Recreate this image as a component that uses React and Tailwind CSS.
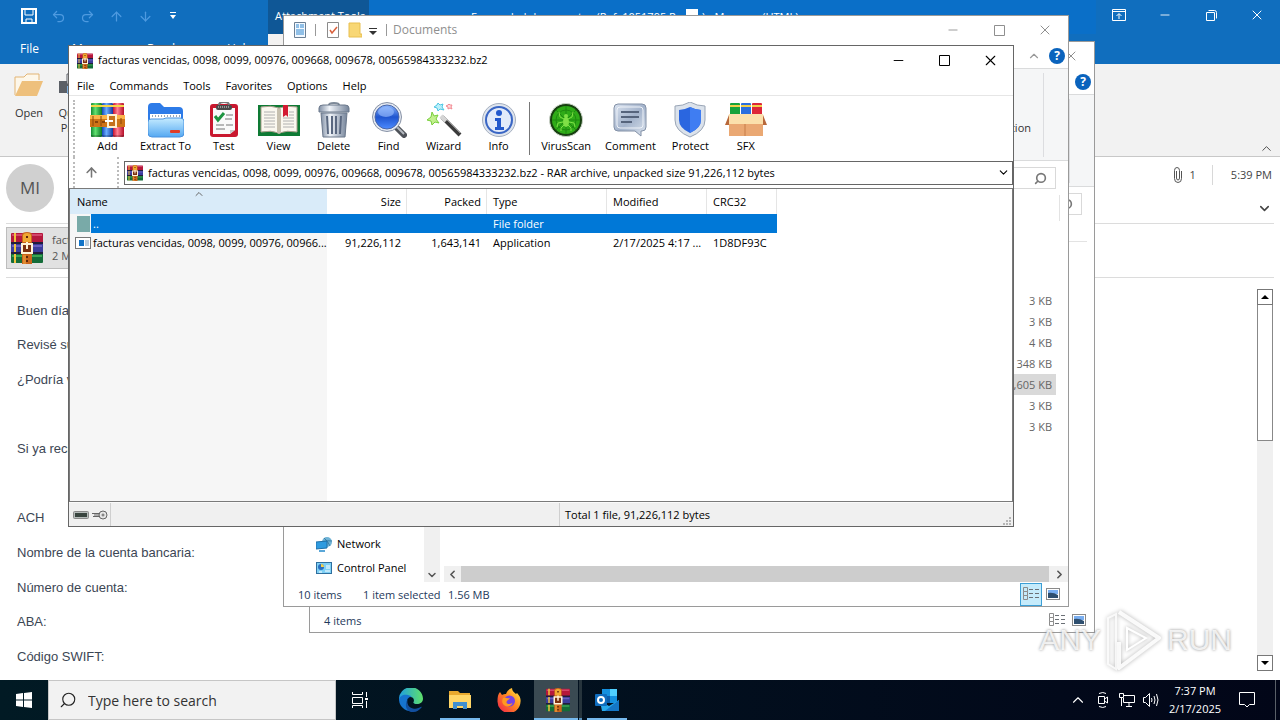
import {
  ArrowDown,
  ArrowUp,
  ChevronDown,
  ChevronLeft,
  ChevronRight,
  ChevronUp,
  Minus,
  Redo2,
  Search,
  Undo2,
  X,
} from 'lucide-react';

const bodyLines = [
  'Buen día,',
  'Revisé sus',
  '¿Podría ver',
  '',
  'Si ya recibió',
  '',
  'ACH',
  'Nombre de la cuenta bancaria:',
  'Número de cuenta:',
  'ABA:',
  'Código SWIFT:',
];

const fileSizes = ['3 KB', '3 KB', '4 KB', '348 KB', '1,605 KB', '3 KB', '3 KB'];

/* ---------- icons ---------- */

function BooksIcon({ className }) {
  return (
    <svg viewBox="0 0 32 32" className={className} aria-hidden="true">
      <rect x="0" y="1" width="32" height="10" rx="1" fill="#b5183c" />
      <rect x="1" y="2" width="30" height="2" fill="#d2456b" />
      <rect x="0" y="11" width="32" height="10" rx="1" fill="#3b3c9c" />
      <rect x="1" y="13" width="30" height="2" fill="#6a5fc0" />
      <rect x="0" y="21" width="32" height="10" rx="1" fill="#146c38" />
      <rect x="1" y="23" width="30" height="2" fill="#39a552" />
      <path d="M3 1h2v9H3zM3 12h2v8H3zM3 22h2v9H3z" fill="#f0c23c" />
      <path d="M0 10h32v2H0zM0 20h32v2H0z" fill="#221c3c" />
      <path d="M11 3q0-3 5-3t5 3v29H11z" fill="#c9651c" />
      <path d="M12 3q1-2 4-2t4 2v7h-8z" fill="#f0a832" />
      <path d="M12 23h3v9h-3z" fill="#e08a30" />
      <rect x="11" y="12" width="10" height="9" fill="#7c3010" stroke="#fff3d8" strokeWidth="2" />
      <path d="M16 10v7" stroke="#fff3d8" strokeWidth="2" />
      <path d="M16 4v2M16 24v2M16 28v2" stroke="#5e2608" strokeWidth="2" />
    </svg>
  );
}

function AddIcon() {
  return (
    <svg viewBox="0 0 36 36" className="size-9" aria-hidden="true">
      <defs>
        <linearGradient id="bookGreen">
          <stop offset="0" stopColor="#128a32" />
          <stop offset=".4" stopColor="#62e070" />
          <stop offset="1" stopColor="#0b7a28" />
        </linearGradient>
        <linearGradient id="bookBlue">
          <stop offset="0" stopColor="#1547b8" />
          <stop offset=".4" stopColor="#6aaeff" />
          <stop offset="1" stopColor="#1238a0" />
        </linearGradient>
        <linearGradient id="bookRed">
          <stop offset="0" stopColor="#c4122f" />
          <stop offset=".4" stopColor="#ff8093" />
          <stop offset="1" stopColor="#b50d28" />
        </linearGradient>
      </defs>
      <rect x="1" y="1" width="11" height="34" rx="1" fill="url(#bookGreen)" />
      <rect x="12" y="1" width="11" height="34" rx="1" fill="url(#bookBlue)" />
      <rect x="23" y="1" width="11" height="34" rx="1" fill="url(#bookRed)" />
      <path d="M1 4h11M12 4h11M23 4h11" stroke="#f5d548" strokeWidth="2" />
      <path d="M1 34h33" stroke="#000" strokeOpacity=".2" strokeWidth="2" />
      <path d="M0 13h35v12H0z" fill="#cf7417" />
      <path d="M0 13h35v4H0z" fill="#fbb54a" />
      <path d="M3 14v10M11 14v10M31 16v6" stroke="#8a4408" />
      <path d="M5 20h3M12 20h3" stroke="#8a4408" strokeWidth="2" />
      <rect x="18" y="13" width="8" height="12" fill="#c5721c" stroke="#fff1cf" strokeWidth="2" />
      <path d="M15 19h8" stroke="#fff" strokeWidth="2" />
    </svg>
  );
}

function ExtractIcon() {
  return (
    <svg viewBox="0 0 36 36" className="size-9" aria-hidden="true">
      <defs>
        <linearGradient id="folderFront" x2="0" y2="1">
          <stop offset="0" stopColor="#c5ebff" />
          <stop offset="1" stopColor="#55a9f2" />
        </linearGradient>
      </defs>
      <path d="M0 5q0-4 4-4h8l4 4h15q4 0 4 4v20H0z" fill="#2d7be8" />
      <path d="M2 12h31v9H2z" fill="#fff" />
      <path d="M4 14h28" stroke="#9aa6b5" strokeWidth="2" strokeDasharray="1 2" />
      <path d="M0 20q0-3 3-3h12l3-1h14q4 0 4 3v12q0 4-4 4H4q-4 0-4-4z" fill="url(#folderFront)" stroke="#4a93e0" />
      <rect x="22" y="28" width="10" height="3" rx="1" fill="#e03c28" />
    </svg>
  );
}

function TestIcon() {
  return (
    <svg viewBox="0 0 36 36" className="size-9" aria-hidden="true">
      <rect x="4" y="2" width="28" height="33" rx="3" fill="#c9182f" />
      <path d="M7 6h22v22l-5 4H7z" fill="#fafafa" />
      <path d="M29 28l-5 4v-4z" fill="#c9c9c9" />
      <rect x="10" y="3" width="16" height="5" rx="2" fill="#4a4a4a" />
      <path d="M13 3q0-3 5-3t5 3" fill="none" stroke="#777" strokeWidth="2" />
      <path d="M12 5h12" stroke="#e2e2e2" strokeDasharray="1 1" />
      <path d="M9 14l3 4 6-7" fill="none" stroke="#1d9440" strokeWidth="3" />
      <path d="M20 13h7M19 17h7M10 23h8M20 23h7M10 27h9" stroke="#777" />
    </svg>
  );
}

function ViewIcon() {
  return (
    <svg viewBox="0 0 44 36" className="h-9 w-11" aria-hidden="true">
      <path d="M1 3h42v31H1z" fill="#0e7a34" />
      <path d="M4 5q10-2 18 1v25q-8-3-18-1zM40 5q-10-2-18 1v25q8-3 18-1z" fill="#faf7ef" stroke="#a99f8c" />
      <path d="M20 6l2 1 2-1v25l-2 1-2-1z" fill="#c6bfae" />
      <path
        d="M7 10h11M7 13h11M7 16h11M7 19h11M7 22h11M7 25h11M32 10h5M32 13h5M26 16h11M26 19h11M26 22h11M26 25h11"
        stroke="#b0b0b0"
      />
      <path d="M26 3h5v12l-2-2-3 2z" fill="#d31b32" />
    </svg>
  );
}

function DeleteIcon() {
  return (
    <svg viewBox="0 0 36 36" className="size-9" aria-hidden="true">
      <defs>
        <linearGradient id="can">
          <stop offset="0" stopColor="#8290a5" />
          <stop offset=".35" stopColor="#f0f4f9" />
          <stop offset="1" stopColor="#75849a" />
        </linearGradient>
      </defs>
      <path d="M13 3q0-2 5-2t5 2" fill="none" stroke="#7d8998" strokeWidth="2" />
      <path d="M3 6q0-3 4-3h22q4 0 4 3v4H3z" fill="url(#can)" stroke="#6b788b" />
      <path d="M5 11h26l-2 24H7z" fill="url(#can)" stroke="#6b788b" />
      <path d="M11 14l1 18M16 14v18M20 14v18M25 14l-1 18" stroke="#5a6880" strokeWidth="2" />
    </svg>
  );
}

function FindIcon() {
  return (
    <svg viewBox="0 0 36 36" className="size-9" aria-hidden="true">
      <defs>
        <linearGradient id="lens" x2="0" y2="1">
          <stop offset="0" stopColor="#8db8ff" />
          <stop offset=".5" stopColor="#1f55cf" />
          <stop offset="1" stopColor="#4c8bff" />
        </linearGradient>
      </defs>
      <path d="M25 25l8 8" stroke="#4e5259" strokeWidth="6" strokeLinecap="round" />
      <path d="M25 24l8 8" stroke="#b5b9c0" strokeWidth="2" />
      <circle cx="16" cy="15" r="14.500" fill="#e3e8f0" stroke="#8792a6" />
      <circle cx="16" cy="15" r="12" fill="url(#lens)" stroke="#4a66a8" />
      <ellipse cx="15" cy="10" rx="8" ry="5" fill="#9fc2ff" opacity=".6" />
    </svg>
  );
}

function WizardIcon() {
  return (
    <svg viewBox="0 0 36 36" className="size-9" aria-hidden="true">
      <path d="M16 15l18 18" stroke="#3b3b3b" strokeWidth="4" />
      <path d="M17 14l17 17" stroke="#8e8e8e" strokeWidth="1" />
      <path d="M15 14l5 5" stroke="#d5d5d5" strokeWidth="4" />
      <path d="M6 10l2 4 4-1-2 4 3 4-4-1-3 3-1-4-4-1 4-3z" fill="#c2f08d" stroke="#79cf3c" />
      <path d="M12 1l2 2 3-1-1 3 2 3-4-1-2 2-1-3-3-1 3-2z" fill="#baf0fa" stroke="#4fc6e4" />
      <path d="M23 2l1 1h2l-1 2 1 2-2-1-2 1v-2l-2-1 2-1z" fill="#ffdada" stroke="#f28a93" />
    </svg>
  );
}

function InfoIcon() {
  return (
    <svg viewBox="0 0 36 36" className="size-9" aria-hidden="true">
      <circle cx="18" cy="18" r="16.500" fill="#dfe5ee" stroke="#a5afbf" />
      <circle cx="18" cy="18" r="13" fill="#e3ebfa" stroke="#3a66c4" strokeWidth="2" />
      <circle cx="18" cy="11" r="3" fill="#2459cc" />
      <path d="M14 16h6v9h3v3h-9v-3h2v-6h-2z" fill="#2459cc" />
    </svg>
  );
}

function VirusIcon() {
  return (
    <svg viewBox="0 0 36 36" className="size-9" aria-hidden="true">
      <circle cx="18" cy="18" r="16.500" fill="#173f10" stroke="#c9d1c7" />
      <circle cx="18" cy="18" r="14" fill="#2fab18" />
      <path d="M18 4v28M4 18h28M8 8l20 20M28 8L8 28" stroke="#1f8a10" />
      <circle cx="18" cy="18" r="10" fill="none" stroke="#1f8a10" />
      <ellipse cx="18" cy="20" rx="3" ry="5" fill="#7fe046" />
      <circle cx="18" cy="14" r="2" fill="#7fe046" />
      <path
        d="M16 17l-4-2-1-5M15 20l-5 1-1 4M16 23l-3 3v3M20 17l4-2 1-5M21 20l5 1 1 4M20 23l3 3v3"
        fill="none"
        stroke="#7fe046"
      />
    </svg>
  );
}

function CommentIcon() {
  return (
    <svg viewBox="0 0 36 36" className="size-9" aria-hidden="true">
      <defs>
        <linearGradient id="bubble" x2="1" y2="1">
          <stop offset="0" stopColor="#dae3f0" />
          <stop offset=".5" stopColor="#a3b3cb" />
          <stop offset="1" stopColor="#dce4ef" />
        </linearGradient>
      </defs>
      <path d="M6 2h24q4 0 4 4v19q0 4-4 4h-1v5l-6-5H6q-4 0-4-4V6q0-4 4-4z" fill="url(#bubble)" stroke="#8290a6" />
      <rect x="5" y="5" width="26" height="21" rx="3" fill="none" stroke="#eef2f8" />
      <path d="M9 10h18M9 15h18M9 20h11" stroke="#56647c" strokeWidth="2" />
    </svg>
  );
}

function ProtectIcon() {
  return (
    <svg viewBox="0 0 36 36" className="size-9" aria-hidden="true">
      <path d="M18 0q7 4 15 4v14q0 11-15 17Q3 29 3 18V4q8 0 15-4z" fill="#dbe2eb" stroke="#98a4b5" />
      <path d="M18 5q6 3 11 3v10q0 8-11 13Q7 26 7 18V8q5 0 11-3z" fill="#2a66e0" />
      <path d="M18 5q6 3 11 3v10q0 8-11 13z" fill="#3f7df2" />
    </svg>
  );
}

function SfxIcon() {
  return (
    <svg viewBox="0 0 42 36" className="h-9 w-[42px]" aria-hidden="true">
      <rect x="5" y="1" width="10" height="14" rx="1" fill="#17a33a" />
      <rect x="16" y="1" width="10" height="14" rx="1" fill="#2a6fdf" />
      <rect x="27" y="1" width="10" height="14" rx="1" fill="#dd2739" />
      <path d="M5 4h10M16 4h10M27 4h10" stroke="#f2d04a" strokeWidth="2" />
      <path d="M4 13h34v21H4z" fill="#eaa873" />
      <path d="M4 12h34l2 10H2z" fill="#fbe0ac" />
      <path d="M4 13l-4 10h4zM38 13l4 10h-4z" fill="#b8683a" />
      <path d="M20 22v12" stroke="#c67c48" />
    </svg>
  );
}

function MaximizeIcon() {
  return (
    <svg viewBox="0 0 11 11" className="size-[11px]" fill="none" stroke="currentColor">
      <path d="M.5.5h10v10H.5z" />
    </svg>
  );
}

function HelpBadge() {
  return (
    <button
      aria-label="Help"
      className="flex size-4 items-center justify-center rounded-full bg-[#0a63bd] text-[12px] leading-4 font-bold text-white"
    >
      ?
    </button>
  );
}

function DetailsIcon() {
  return (
    <svg viewBox="0 0 16 14" className="h-[14px] w-4" fill="none" stroke="#6b7076" aria-hidden="true">
      <path d="M.5.5h4v4h-4zM.5 4.500h4v4h-4zM.5 8.500h4v4h-4z" stroke="#8c8c8c" />
      <path d="M6 2.500h4M12 2.500h4M6 6.500h4M12 6.500h4M6 10.500h4M12 10.500h4" />
    </svg>
  );
}

function ThumbIcon() {
  return (
    <svg viewBox="0 0 14 12" className="h-3 w-[14px]" aria-hidden="true">
      <rect x=".5" y=".5" width="13" height="11" fill="#fff" stroke="#8a8a8a" />
      <path d="M2 2h10v4H2z" fill="#79aef0" />
      <path d="M2 5q5-1 10 2v3H2z" fill="#2f4f6f" />
    </svg>
  );
}

/* ---------- Outlook message in the background ---------- */

function OutlookWindow() {
  return (
    <main className="flex min-h-0 flex-1 flex-col bg-white">
      <header className="bg-[#106ebe] text-white">
        <div className="flex h-[34px] items-start">
          <div className="flex h-8 w-[268px] shrink-0 items-center gap-[14px] pl-[21px] text-[#4e9ae0]">
            <button aria-label="Save" className="text-white">
              <svg viewBox="0 0 16 16" className="size-4" fill="none" stroke="currentColor" strokeWidth="2">
                <path d="M1 1h14v14H1z" />
                <path d="M4 2v5h8V2M5 15v-4h6v4" strokeWidth="1" />
              </svg>
            </button>
            <button aria-label="Undo"><Undo2 size={15} /></button>
            <button aria-label="Redo"><Redo2 size={15} /></button>
            <button aria-label="Previous item"><ArrowUp size={15} /></button>
            <button aria-label="Next item"><ArrowDown size={15} /></button>
            <button aria-label="Customize toolbar" className="pl-[2px] text-white">
              <svg viewBox="0 0 8 8" className="size-2" fill="currentColor">
                <path d="M1 0h6v1H1zM1 3h6L4 7z" />
              </svg>
            </button>
          </div>
          <span className="h-[34px] w-[101px] shrink-0 bg-[#0f5796] pt-2 pl-[7px] text-[11px] leading-4 whitespace-nowrap">
            Attachment Tools
          </span>
          <h1 className="flex h-[34px] min-w-0 flex-1 items-start gap-1 overflow-hidden bg-[#0a6fc8] pt-[9px] pl-[102px] text-[11px] leading-4 whitespace-nowrap">
            Forwarded documentos (Ref. 1051795 Re <span className="h-4 w-3 bg-white" /> ) - Message (HTML)
          </h1>
          <div className="flex h-[30px] shrink-0">
            <button aria-label="Ribbon display" className="flex w-[46px] items-center justify-center">
              <svg viewBox="0 0 14 12" className="h-3 w-[14px]" fill="none" stroke="currentColor">
                <path d="M.5.5h13v11H.5zM.5 2.500h13M7 10V5M4.500 7L7 4.500 9.500 7" />
              </svg>
            </button>
            <button aria-label="Minimize" className="flex w-[46px] items-center justify-center">
              <Minus size={14} strokeWidth={1.5} />
            </button>
            <button aria-label="Restore" className="flex w-[46px] items-center justify-center">
              <svg viewBox="0 0 11 11" className="size-[11px]" fill="none" stroke="currentColor">
                <path d="M.5 2.500h8v8h-8zM2.500.5h6q2 0 2 2v6" />
              </svg>
            </button>
            <button aria-label="Close" className="flex w-[46px] items-center justify-center">
              <X size={16} strokeWidth={1.5} />
            </button>
          </div>
        </div>
        <nav className="flex h-[30px] items-center text-[12px]">
          <a href="#file" className="w-[72px] pl-5">File</a>
          <a href="#message" className="w-[75px]">Me</a>
          <a href="#read" className="w-[80px]">Read</a>
          <a href="#help" className="w-[41px]">Hel</a>
          <span className="h-full w-20 bg-[#f3f2f1]" />
        </nav>
      </header>

      <section className="flex h-[93px] justify-between border-b border-[#c8c8c8] bg-[#f2f2f2] text-[11px] leading-[15px] text-[#333]">
        <div className="flex gap-[14px] pt-[9px] pl-[14px]">
          <button className="flex flex-col items-center gap-2">
            <svg viewBox="0 0 30 24" className="h-6 w-[30px]">
              <path d="M1 22V4h9l3-3h12v6" fill="#fdf7ea" stroke="#e3b574" />
              <path d="M1 23L8 8h21l-6 15z" fill="#eec07c" />
            </svg>
            Open
          </button>
          <button className="flex flex-col items-center gap-2">
            <svg viewBox="0 0 30 24" className="h-6 w-[30px]">
              <path d="M1 8h14v12H1z" fill="#5b5f66" />
              <path d="M9 1h12v10H9z" fill="#fff" stroke="#5b5f66" />
              <path d="M9 13h12v8H9z" fill="#7fb0e0" />
            </svg>
            <span>Quick<br />Print</span>
          </button>
        </div>
        <button aria-label="Collapse ribbon" className="self-end px-[6px] text-[#444]">
          <ChevronUp size={15} strokeWidth={1.5} />
        </button>
      </section>

      <section className="flex h-[66px] justify-between pr-2 pl-[6px] text-[#444]">
        <div className="mt-[7px] flex size-12 items-center justify-center rounded-full bg-[#d0d0d0] text-[17px] text-[#555]">
          MI
        </div>
        <div className="flex flex-col items-end pt-2">
          <div className="flex h-5 items-center text-[11px]">
            <svg viewBox="0 0 8 16" className="mr-1 h-4 w-2" fill="none" stroke="#555">
              <path d="M2.500 4v7q0 2 1.500 2t1.500-2V3.500Q5.500.5 3 .5T.5 3.500v8q0 4 3.500 4t3.500-4V4" />
            </svg>
            <span className="pr-4 pl-1">1</span>
            <span className="h-5 border-l border-[#d8d8d8] pr-[18px]" />
            5:39 PM
          </div>
          <button aria-label="Expand header" className="mt-4"><ChevronDown size={15} strokeWidth={2.5} /></button>
        </div>
      </section>

      <section className="mx-[6px] flex h-[55px] items-start border-y border-[#dcdcdc] pt-[3px]">
        <div className="flex h-[42px] w-[200px] items-center gap-[9px] border border-[#bdbdbd] bg-[#e1e1e1] pl-1 text-[11px] leading-4 text-[#555]">
          <BooksIcon className="size-8" />
          <span>fact<br />2 MB</span>
        </div>
      </section>

      <section className="flex min-h-0 flex-1 justify-between pt-[11px] pr-[7px] pb-[9px]">
        <div className="-mb-[3px] flex flex-1 flex-col pt-1 pl-[17px] font-['Liberation_Sans',Arial,sans-serif] text-[13px] text-[#3c4654]">
          {bodyLines.map((line, i) => (
            <p key={i} className="flex flex-1 items-center">{line}</p>
          ))}
        </div>
        <div className="flex w-4 flex-col bg-[#f0f0f0]">
          <button aria-label="Scroll up" className="flex h-4 items-center justify-center border border-[#777] bg-white">
            <svg viewBox="0 0 8 4" className="h-1 w-2"><path d="M0 4l4-4 4 4z" /></svg>
          </button>
          <div className="h-[136px] border border-t-0 border-[#888] bg-white" />
          <button aria-label="Scroll down" className="mt-auto flex h-4 items-center justify-center border border-[#777] bg-white">
            <svg viewBox="0 0 8 4" className="h-1 w-2"><path d="M0 0h8L4 4z" /></svg>
          </button>
        </div>
      </section>
    </main>
  );
}

/* ---------- Explorer windows ---------- */

function ExplorerChrome({ title }) {
  return (
    <>
      <div className="flex h-7 shrink-0 items-center pl-[9px] text-[#8f8f8f]">
        <svg viewBox="0 0 14 16" className="h-4 w-[14px]">
          <path d="M1.500.5h11v15h-11z" fill="#f3f9ff" stroke="#6b7f94" />
          <path d="M3 3h3M3 5h3M7 3h4M7 5h4M3 8h8M3 10h8M3 12h8" stroke="#2f86cf" />
        </svg>
        <span className="mx-2 h-3 border-l border-[#999]" />
        <svg viewBox="0 0 14 16" className="ml-[2px] h-4 w-[14px]">
          <path d="M1.500.5h11v15h-11z" fill="#fff" stroke="#8b8b8b" />
          <path d="M4 8l2 3 5-6" fill="none" stroke="#d9603c" strokeWidth="1.500" />
        </svg>
        <svg viewBox="0 0 14 16" className="ml-2 h-4 w-[14px]">
          <path d="M1 1h11v11h2v3H1z" fill="#f8d775" stroke="#e8bf50" />
        </svg>
        <svg viewBox="0 0 8 8" className="mx-[7px] mt-1 size-2">
          <path d="M0 0h8v1H0zM0 3h8L4 7z" fill="#333" />
        </svg>
        <span className="mr-[6px] ml-[2px] h-3 border-l border-[#999]" />
        <h2 className="flex-1 text-[12px]">{title}</h2>
        <button aria-label="Minimize" className="flex w-[46px] justify-center"><Minus size={14} strokeWidth={1.5} /></button>
        <button aria-label="Maximize" className="flex w-[46px] justify-center"><MaximizeIcon /></button>
        <button aria-label="Close" className="flex w-[46px] justify-center"><X size={16} strokeWidth={1.5} /></button>
      </div>
      <div className="flex h-[25px] shrink-0 items-center justify-end gap-2 border-b border-[#dadbdc] pr-[3px] text-[#999]">
        <ChevronUp size={14} />
        <HelpBadge />
      </div>
      <div className="flex h-[92px] shrink-0 items-center justify-end border-b border-[#dadbdc] bg-[#f5f6f7]">
        {title === 'Documents' && <span className="mt-7 mr-3 text-[11px] text-[#333]">selection</span>}
        <span className="mr-6 h-[84px] border-l border-[#dcdde0]" />
      </div>
      <div className="flex h-[34px] shrink-0 justify-end pt-[6px] pr-3">
        <label className="flex h-[22px] w-[160px] items-center justify-end border border-[#d9d9d9] pr-2 text-[#777]">
          <input aria-label={`Search ${title}`} className="w-full min-w-0 outline-none" />
          <Search size={13} strokeWidth={3} className="shrink-0 -scale-x-100" />
        </label>
      </div>
    </>
  );
}

function ViewSwitch({ active }) {
  return (
    <div className="flex h-full items-center">
      <button
        aria-label="Details"
        className={
          active
            ? 'flex h-[23px] w-[22px] items-center justify-center border border-[#3c9fd6] bg-[#c5ebfb]'
            : 'flex w-[22px] items-center justify-center'
        }
      >
        <DetailsIcon />
      </button>
      <button aria-label="Thumbnails" className="flex w-[22px] items-center justify-center"><ThumbIcon /></button>
    </div>
  );
}

function BackExplorer() {
  return (
    <section className="absolute top-[41px] right-[185px] bottom-[87px] left-[309px] flex flex-col border border-[#9a9a9a] bg-white">
      <ExplorerChrome title="Pictures" />
      <div className="mr-[7px] h-[21px] border-b border-[#e3e3e3]" />
      <footer className="mt-auto flex h-6 items-center justify-between pr-1 pl-[14px] text-[11px] text-[#1e395b]">
        <span className="pt-[2px]">4 items</span>
        <ViewSwitch />
      </footer>
    </section>
  );
}

function FrontExplorer() {
  return (
    <section className="absolute top-[15px] right-[211px] bottom-[113px] left-[283px] flex flex-col border border-[#9a9a9a] bg-white">
      <ExplorerChrome title="Documents" />
      <div className="flex min-h-0 flex-1">
        <nav className="flex w-[140px] flex-col justify-end pb-[2px] pl-8 text-[11px]">
          <a href="#network" className="flex h-6 items-center gap-[5px]">
            <svg viewBox="0 0 16 16" className="size-4">
              <circle cx="11" cy="6" r="5" fill="#6fb3d6" />
              <path d="M8 2q4 3 6 8M7 6q4-2 9-1" stroke="#3b7fa8" fill="none" />
              <path d="M0 6l11-1v7L0 13z" fill="#2f9be0" stroke="#1e6fa8" />
              <path d="M3 15h6" stroke="#5aa7d8" strokeWidth="2" />
            </svg>
            Network
          </a>
          <a href="#control" className="flex h-6 items-center gap-[5px] whitespace-nowrap">
            <svg viewBox="0 0 16 12" className="h-3 w-4">
              <rect x=".5" y=".5" width="15" height="11" fill="#7fd0f5" stroke="#2f6f9e" />
              <circle cx="5" cy="5" r="3" fill="#2a6fc0" />
              <path d="M5 5V2a3 3 0 0 1 3 3z" fill="#f6d04a" />
              <path d="M10 4h4M10 6h4M3 10h3M9 9h5" stroke="#fff" />
            </svg>
            Control Panel
          </a>
        </nav>
        <div className="flex w-4 items-end justify-center bg-[#f0f0f0] pb-px text-[#555]">
          <ChevronDown size={12} strokeWidth={3} />
        </div>
        <div className="ml-1 flex min-w-0 flex-1 flex-col">
          <div className="mr-2 h-[26px] border-r border-[#e3e3e3]" />
          <table className="mt-[69px] mr-3 text-[11px] text-[#666]">
            <tbody>
              {fileSizes.map((size, i) => (
                <tr key={i} className={size === '1,605 KB' ? 'h-[21px] bg-[#d9d9d9]' : 'h-[21px]'}>
                  <td className="pr-1 text-right leading-[21px]">{size}</td>
                </tr>
              ))}
            </tbody>
          </table>
          <div className="mt-auto flex h-4 items-center justify-between bg-[#f0f0f0] text-[#555]">
            <ChevronLeft size={13} strokeWidth={3} className="mx-[2px]" />
            <div className="h-4 flex-1 bg-[#cdcdcd]" />
            <ChevronRight size={13} strokeWidth={3} className="mr-[2px] ml-1" />
          </div>
        </div>
      </div>
      <footer className="flex h-6 shrink-0 items-center pr-1 pl-[14px] text-[11px] text-[#1e395b]">
        <span className="w-[65px] pt-[2px]">10 items</span>
        <span className="w-[85px] pt-[2px] whitespace-nowrap">1 item selected</span>
        <span className="flex-1 pt-[2px]">1.56 MB</span>
        <ViewSwitch active />
      </footer>
    </section>
  );
}

/* ---------- WinRAR ---------- */

const leftTools = [
  { label: 'Add', Icon: AddIcon },
  { label: 'Extract To', Icon: ExtractIcon },
  { label: 'Test', Icon: TestIcon },
  { label: 'View', Icon: ViewIcon },
  { label: 'Delete', Icon: DeleteIcon },
  { label: 'Find', Icon: FindIcon },
  { label: 'Wizard', Icon: WizardIcon },
  { label: 'Info', Icon: InfoIcon },
];

const rightTools = [
  { label: 'VirusScan', Icon: VirusIcon },
  { label: 'Comment', Icon: CommentIcon },
  { label: 'Protect', Icon: ProtectIcon },
  { label: 'SFX', Icon: SfxIcon },
];

function ToolButton({ label, Icon, padding = 'px-[5px]' }) {
  return (
    <button className={`flex min-w-[55px] flex-col items-center whitespace-nowrap ${padding}`}>
      <Icon />
      <span className="leading-4">{label}</span>
    </button>
  );
}

function ArchiveTable() {
  const head = 'border-r border-[#e5e5e5] p-0 font-normal';
  return (
    <table className="w-[707px] table-fixed border-separate border-spacing-0 leading-[19px]">
      <colgroup>
        <col className="w-[257px]" />
        <col className="w-[80px]" />
        <col className="w-[80px]" />
        <col className="w-[120px]" />
        <col className="w-[100px]" />
        <col className="w-[70px]" />
      </colgroup>
      <thead>
        <tr className="h-[25px] text-left">
          <th className="relative bg-[#d9ebf9] p-0 pl-[7px] font-normal">
            Name
            <ChevronUp size={12} strokeWidth={2} className="absolute inset-x-0 -top-px mx-auto text-[#666]" />
          </th>
          <th className={`${head} pr-[5px] text-right`}>Size</th>
          <th className={`${head} pr-[5px] text-right`}>Packed</th>
          <th className={`${head} pl-[6px]`}>Type</th>
          <th className={`${head} pl-[6px]`}>Modified</th>
          <th className={`${head} pl-[6px]`}>CRC32</th>
        </tr>
      </thead>
      <tbody>
        <tr className="h-[19px] bg-[#0078d7] text-white">
          <td className="p-0">
            <div className="flex items-center">
              <span className="flex h-[19px] w-[21px] items-center justify-end bg-[#f6f6f6] pr-px">
                <span className="h-4 w-[13px] bg-[#79aaa8]" />
              </span>
              <span className="pl-[2px]">..</span>
            </div>
          </td>
          <td />
          <td />
          <td className="p-0 pl-[6px]">File folder</td>
          <td />
          <td />
        </tr>
        <tr className="h-[19px] whitespace-nowrap">
          <td className="p-0">
            <div className="flex items-center gap-[2px] pl-[5px]">
              <svg viewBox="0 0 16 12" className="h-3 w-4 shrink-0">
                <rect x=".5" y=".5" width="15" height="11" fill="#fff" stroke="#777" />
                <rect x="4" y="3" width="5" height="6" fill="#1173c7" />
                <path d="M10 4h4M10 6h4M10 8h4" stroke="#7a9cba" />
              </svg>
              <span>facturas vencidas, 0098, 0099, 00976, 00966...</span>
            </div>
          </td>
          <td className="p-0 pr-[6px] text-right">91,226,112</td>
          <td className="p-0 pr-[6px] text-right">1,643,141</td>
          <td className="p-0 pl-[6px]">Application</td>
          <td className="p-0 pl-[6px]">2/17/2025 4:17 ...</td>
          <td className="p-0 pl-[6px]">1D8DF93C</td>
        </tr>
      </tbody>
    </table>
  );
}

function WinRarWindow() {
  return (
    <section className="absolute top-[45px] right-[266px] bottom-[193px] left-[68px] flex flex-col border border-[#666] bg-white text-[11px] text-black">
      <div className="flex h-[29px] shrink-0 items-center pl-2">
        <BooksIcon className="size-4" />
        <h2 className="flex-1 pl-[5px]">facturas vencidas, 0098, 0099, 00976, 009668, 009678, 00565984333232.bz2</h2>
        <button aria-label="Minimize" className="flex w-[46px] justify-center"><Minus size={15} strokeWidth={1.5} /></button>
        <button aria-label="Maximize" className="flex w-[46px] justify-center"><MaximizeIcon /></button>
        <button aria-label="Close" className="flex w-[46px] justify-center"><X size={17} strokeWidth={1.5} /></button>
      </div>
      <nav className="flex h-[21px] shrink-0 items-center gap-[15px] border-b border-[#e6e6e6] pt-[2px] pl-2">
        <button>File</button>
        <button>Commands</button>
        <button>Tools</button>
        <button>Favorites</button>
        <button>Options</button>
        <button>Help</button>
      </nav>
      <div className="flex h-[61px] shrink-0 pl-1">
        <span className="mt-1 mr-[5px] border-l-2 border-dotted border-[#bbb]" />
        <div className="flex pt-[6px]">
          {leftTools.map((tool) => <ToolButton key={tool.label} {...tool} />)}
          <span className="mr-1 ml-[3px] h-[53px] border-l border-[#777]" />
          {rightTools.map((tool) => <ToolButton key={tool.label} padding="px-[7px]" {...tool} />)}
        </div>
      </div>
      <div className="flex h-[31px] shrink-0 items-center pl-1">
        <span className="h-full border-l-2 border-dotted border-[#bbb]" />
        <button aria-label="Up one level" className="flex w-[42px] justify-center pr-[10px] text-[#777]">
          <ArrowUp size={15} strokeWidth={2.5} />
        </button>
        <span className="h-full border-l-2 border-dotted border-[#bbb]" />
        <div className="ml-[5px] flex h-6 flex-1 items-center border border-[#666] pl-[2px]">
          <BooksIcon className="size-4 shrink-0" />
          <span className="flex-1 pt-[2px] pl-[5px]">
            facturas vencidas, 0098, 0099, 00976, 009668, 009678, 00565984333232.bz2 - RAR archive, unpacked size 91,226,112 bytes
          </span>
          <button aria-label="Show history" className="pr-[2px]"><ChevronDown size={13} strokeWidth={2} /></button>
        </div>
      </div>
      <div className="min-h-0 flex-1 border border-[#7a7a7a] bg-[linear-gradient(to_right,#f6f6f6_257px,#ffffff_257px)]">
        <ArchiveTable />
      </div>
      <footer className="flex h-6 shrink-0 items-center border-t border-[#fafafa] bg-[#f0f0f0] pl-1">
        <div className="flex h-full w-[38px] items-center gap-[3px] border-r border-[#cfcfcf]">
          <svg viewBox="0 0 16 8" className="h-2 w-4">
            <rect x=".5" y=".5" width="15" height="7" rx="1" fill="#b6bcba" stroke="#8a8a8a" />
            <rect x="2" y="2" width="12" height="4" fill="#39453f" />
          </svg>
          <svg viewBox="0 0 16 10" className="h-[10px] w-4" fill="none" stroke="#666">
            <path d="M0 3.500h8M1 6.500h7M2 5h6" />
            <circle cx="11" cy="5" r="4" fill="#e6e6e6" />
            <circle cx="11" cy="5" r="1" />
          </svg>
        </div>
        <div className="h-full flex-1 border-r border-[#cfcfcf]" />
        <div className="flex h-full flex-1 items-center justify-between pt-[2px] pl-[5px]">
          <span>Total 1 file, 91,226,112 bytes</span>
          <svg viewBox="0 0 9 9" className="mr-px size-[9px] self-end" fill="#b5b5b5">
            <path d="M6 0h2v2H6zM3 3h2v2H3zM6 3h2v2H6zM0 6h2v2H0zM3 6h2v2H3zM6 6h2v2H6z" />
          </svg>
        </div>
      </footer>
    </section>
  );
}

/* ---------- taskbar ---------- */

function EdgeLogo() {
  return (
    <svg viewBox="0 0 24 24" className="size-6">
      <defs>
        <linearGradient id="edgeTop">
          <stop offset="0" stopColor="#1f9fe0" />
          <stop offset="1" stopColor="#5fe06a" />
        </linearGradient>
      </defs>
      <path d="M0 12A12 12 0 0 1 24 10.500c0 4-3 5.500-6 5.500-3 0-4-1-3.500-2 1-1.500.5-5-3.500-5C6 9 1 10 0 12z" fill="url(#edgeTop)" />
      <path d="M0 12c0-4 5-6 9-5 2 .5 3 1 3.500 2C9 8.500 7.500 12 8 15c.6 4 4 6.500 8 7.500A12 12 0 0 1 0 12z" fill="#1674cf" />
      <path d="M10.500 9.500C7 12 7.500 19 14 20.500c3 .7 6-.3 8-1.700.5-.3.800.1.500.6A12 12 0 0 1 12 24C6 23 5 14 10.500 9.500z" fill="#124f9f" />
    </svg>
  );
}

function FirefoxLogo() {
  return (
    <svg viewBox="0 0 24 24" className="size-6">
      <defs>
        <linearGradient id="fox" x1="1" x2="0" y2="1">
          <stop offset="0" stopColor="#fff04a" />
          <stop offset=".45" stopColor="#ff8a1f" />
          <stop offset="1" stopColor="#f0184f" />
        </linearGradient>
      </defs>
      <path d="M3 4l2 3c1-1 3-1 4-1 1-3 3-5 6-6 0 3 2 4 4 6l1-1c3 3 4 6 3.500 9A11.500 11.500 0 0 1 .5 13C.5 9 1 6 3 4z" fill="url(#fox)" />
      <circle cx="12.500" cy="13" r="5.500" fill="#7543e3" />
      <path d="M6 10c3-1 4 1 7 0-1 2-3 2-3.500 4-.3 2 3 3 6 1-1 4-8 5-10 0-.5-2-.2-3.500.5-5z" fill="#ff9a22" />
    </svg>
  );
}

function Taskbar() {
  return (
    <footer className="z-10 flex h-10 shrink-0 items-stretch bg-linear-to-r from-[#011a24] to-[#020618] text-white">
      <button aria-label="Start" className="flex w-12 items-center justify-center">
        <svg viewBox="0 0 16 16" className="size-4" fill="#fff">
          <path d="M0 2l7-1v6.500H0zM8 1l8-1v7.500H8zM0 8.500h7V15l-7-1zM8 8.500h8V16l-8-1z" />
        </svg>
      </button>
      <label className="flex w-[288px] items-center gap-[11px] border border-[#c6c6c6] bg-[#f2f2f2] pl-[10px] text-[#222]">
        <Search size={18} strokeWidth={1.5} className="shrink-0 -scale-x-100" />
        <input
          aria-label="Search"
          placeholder="Type here to search"
          className="w-full min-w-0 text-[14px] outline-none placeholder:text-[#333]"
        />
      </label>
      <div className="flex items-stretch">
        <button aria-label="Task view" className="flex w-12 items-center justify-center">
          <svg viewBox="0 0 18 16" className="h-4 w-[18px]" fill="none" stroke="#fff">
            <path d="M1.500 0v2.500h10V0M1.500 5.500h10v6h-10zM1.500 16v-2.500h10V16M15.500 0v5M15.500 9v7" />
            <path d="M14 6h3v2h-3z" fill="#fff" stroke="none" />
          </svg>
        </button>
        <button aria-label="Edge" className="flex w-[54px] items-center justify-center"><EdgeLogo /></button>
        <button aria-label="File Explorer" className="mx-[2px] flex w-10 items-center justify-center border-b-2 border-[#76b9ed] pt-[2px]">
          <svg viewBox="0 0 22 20" className="h-5 w-[22px]">
            <path d="M0 1h9l2 2h10v15H0z" fill="#e8a92e" />
            <path d="M0 5h22v13H0z" fill="#ffd667" />
            <path d="M4 19v-7h14v7h-4v-3H8v3z" fill="#3f8fd0" />
          </svg>
        </button>
        <button aria-label="Firefox" className="mr-1 flex w-12 items-center justify-center pl-[6px]"><FirefoxLogo /></button>
        <button aria-label="WinRAR" className="flex w-11 items-center justify-center border-b-2 border-[#76b9ed] bg-[#3a4a52] pt-[2px] pl-1">
          <BooksIcon className="size-6" />
        </button>
        <span className="mr-[5px] ml-px w-[3px] border-b-2 border-[#5a93bf] bg-[#26343c]" />
        <button aria-label="Outlook" className="flex w-10 items-center justify-center border-b-2 border-[#76b9ed] pt-[2px]">
          <svg viewBox="0 0 24 22" className="h-[22px] w-6">
            <path d="M7 0h15v14H7z" fill="#1490df" />
            <path d="M15 0h7v7h-7z" fill="#50d0ff" />
            <path d="M7 7h8v7H7z" fill="#0a5cab" />
            <path d="M5 12l9 5 10-6v11H7z" fill="#28a8ea" />
            <path d="M24 11v11H10z" fill="#1476c6" />
            <rect x="0" y="5" width="12" height="12" rx="1" fill="#0f6cbd" />
            <circle cx="6" cy="11" r="3" fill="none" stroke="#fff" strokeWidth="2" />
          </svg>
        </button>
      </div>
      <div className="ml-auto flex items-center">
        <button aria-label="Hidden icons" className="flex w-6 justify-center"><ChevronUp size={18} strokeWidth={1.5} /></button>
        <button aria-label="Meet now" className="flex w-[25px] justify-center">
          <svg viewBox="0 0 12 16" className="h-4 w-3" fill="none" stroke="#fff">
            <path d="M2 1.500q4-2 7 0M2 14.500q4 2 7 0M1.500 4.500h6v7h-6zM7.500 7l3-2v6l-3-2" />
          </svg>
        </button>
        <button aria-label="Network" className="flex w-6 justify-center">
          <svg viewBox="0 0 16 14" className="h-[14px] w-4" fill="none" stroke="#fff">
            <path d="M5 2.500h10.500v7H4.500V5M.5.5h4v4h-4zM2.500 5v8M7 13.500h6M10 10v3" />
          </svg>
        </button>
        <button aria-label="Volume" className="flex w-6 justify-center">
          <svg viewBox="0 0 17 14" className="h-[14px] w-[17px]" fill="none" stroke="#fff">
            <path d="M.5 4.500h2l4-4v13l-4-4h-2zM8.500 5q1 2 0 4M11 3q2 4 0 8M13.500 1q3 6 0 12" />
          </svg>
        </button>
        <time className="w-16 text-center text-[11px] leading-[18px]">
          7:37 PM<br />2/17/2025
        </time>
        <button aria-label="Notifications" className="flex w-10 justify-center">
          <svg viewBox="0 0 16 16" className="size-4" fill="none" stroke="#fff">
            <path d="M.5.5h15v12h-5L8 15l-2.500-2.500h-5z" />
          </svg>
        </button>
        <span className="mr-1 ml-2 h-10 border-l border-[#5a6068]" />
      </div>
    </footer>
  );
}

function Watermark() {
  const word =
    "font-['Liberation_Sans',sans-serif] text-[30px] leading-10 text-white/80 [text-shadow:0_0_3px_#888]";
  return (
    <div className="pointer-events-none absolute right-12 bottom-12 flex items-center gap-1">
      <span className={word}>ANY</span>
      <svg viewBox="0 0 58 64" className="h-16 w-[58px] drop-shadow-[0_0_2px_#aaa]" fill="none" stroke="#fff" strokeWidth="4">
        <path d="M14 4L54 30 14 60V34" strokeLinejoin="round" opacity=".9" />
        <path d="M3 10v46l8 5V6z" strokeWidth="2" opacity=".8" />
        <path d="M22 20l19 10-19 12z" strokeWidth="2" />
      </svg>
      <span className={word}>RUN</span>
    </div>
  );
}

export default function App() {
  return (
    <div className="relative flex h-screen w-full flex-col overflow-hidden font-['Open_Sans','Noto_Sans',sans-serif]">
      <OutlookWindow />
      <BackExplorer />
      <FrontExplorer />
      <WinRarWindow />
      <Watermark />
      <Taskbar />
    </div>
  );
}
